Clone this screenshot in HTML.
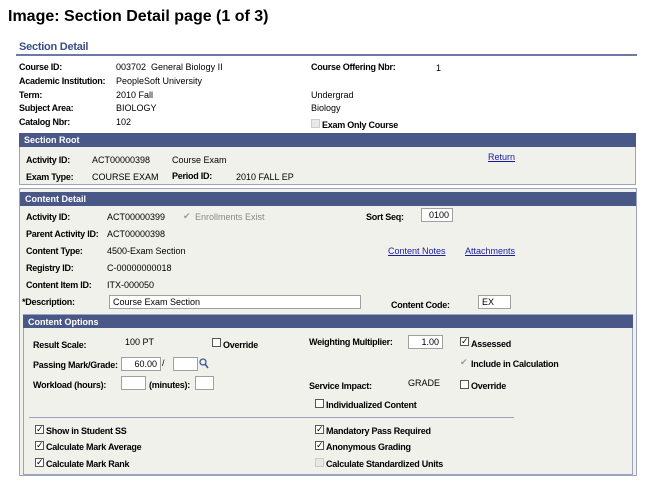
<!DOCTYPE html><html><head><style>
body{margin:0;width:651px;height:491px;background:#fff;font-family:"Liberation Sans",Arial,sans-serif;font-size:9px;color:#000;position:relative;overflow:hidden}
div,span{position:absolute;white-space:nowrap}
.b{font-weight:bold;letter-spacing:-0.25px}
.hd{background:#4a5888;color:#fff;font-weight:bold;height:14px;line-height:14px;padding-left:5px;box-sizing:border-box}
.in{background:#fff;border:1px solid #a0a0a0;box-sizing:border-box;height:14px;line-height:12px;padding:0 3px}
.cb{width:9px;height:9px;border:1px solid #555;background:#fff;box-sizing:border-box;font-size:9px;line-height:7px;text-align:center}
.cd{border-color:#ccc;background:#e8e8e8;color:#999}
a{color:#1a1aa0;text-decoration:underline}
</style></head><body>
<div style="left:8px;top:8px;font-size:16px;font-weight:bold">Image: Section Detail page (1 of 3)</div>
<div class="b" style="left:19px;top:41px;font-size:11px;color:#3b4f86">Section Detail</div>
<div style="left:16px;top:54px;width:621px;height:2px;background:#6d7aa6"></div>
<div class="b" style="left:19px;top:62px">Course ID:</div><div style="left:116px;top:62px">003702&nbsp; General Biology II</div>
<div class="b" style="left:311px;top:62px">Course Offering Nbr:</div><div style="left:436px;top:63px">1</div>
<div class="b" style="left:19px;top:76px">Academic Institution:</div><div style="left:116px;top:76px">PeopleSoft University</div>
<div class="b" style="left:19px;top:90px">Term:</div><div style="left:116px;top:90px">2010 Fall</div><div style="left:311px;top:90px">Undergrad</div>
<div class="b" style="left:19px;top:103px">Subject Area:</div><div style="left:116px;top:103px">BIOLOGY</div><div style="left:311px;top:103px">Biology</div>
<div class="b" style="left:19px;top:117px">Catalog Nbr:</div><div style="left:116px;top:117px">102</div>
<div class="cb cd" style="left:311px;top:119px"></div><div class="b" style="left:322px;top:120px">Exam Only Course</div>
<div style="left:19px;top:133px;width:617px;height:52px;border:1px solid #9aa3bf;background:#f1f1eb;box-sizing:border-box"></div>
<div class="hd" style="left:19px;top:133px;width:617px">Section Root</div>
<div class="b" style="left:26px;top:155px">Activity ID:</div><div style="left:92px;top:155px">ACT00000398</div><div style="left:172px;top:155px">Course Exam</div>
<div style="left:488px;top:152px"><a>Return</a></div>
<div class="b" style="left:26px;top:172px">Exam Type:</div><div style="left:92px;top:172px">COURSE EXAM</div><div class="b" style="left:172px;top:171px">Period ID:</div><div style="left:236px;top:172px">2010 FALL EP</div>
<div style="left:19px;top:188px;width:618px;height:288px;border:1px solid #9aa3bf;background:#f1f1eb;box-sizing:border-box"></div>
<div class="hd" style="left:20px;top:192px;width:616px">Content Detail</div>
<div class="b" style="left:26px;top:212px">Activity ID:</div><div style="left:107px;top:212px">ACT00000399</div>
<div style="left:183px;top:211px;color:#999">&#10004;</div><div style="left:195px;top:212px;color:#888">Enrollments Exist</div>
<div class="b" style="left:366px;top:212px">Sort Seq:</div><div class="in" style="left:421px;top:208px;width:32px;text-align:right">0100</div>
<div class="b" style="left:26px;top:229px">Parent Activity ID:</div><div style="left:107px;top:229px">ACT00000398</div>
<div class="b" style="left:26px;top:246px">Content Type:</div><div style="left:107px;top:246px">4500-Exam Section</div>
<div style="left:388px;top:246px"><a>Content Notes</a></div><div style="left:465px;top:246px"><a>Attachments</a></div>
<div class="b" style="left:26px;top:263px">Registry ID:</div><div style="left:107px;top:263px">C-00000000018</div>
<div class="b" style="left:26px;top:280px">Content Item ID:</div><div style="left:107px;top:280px">ITX-000050</div>
<div class="b" style="left:22px;top:297px">*Description:</div><div class="in" style="left:109px;top:295px;width:252px">Course Exam Section</div>
<div class="b" style="left:391px;top:300px">Content Code:</div><div class="in" style="left:478px;top:295px;width:33px">EX</div>
<div class="hd" style="left:23px;top:314px;width:610px;border-top:1px solid #9aa3bf">Content Options</div>
<div style="left:23px;top:328px;width:610px;height:147px;border:1px solid #9aa3bf;border-top:0;box-sizing:border-box"></div>
<div class="b" style="left:33px;top:340px">Result Scale:</div><div style="left:125px;top:337px">100 PT</div>
<div class="cb" style="left:212px;top:338px"></div><div class="b" style="left:223px;top:340px">Override</div>
<div class="b" style="left:309px;top:337px">Weighting Multiplier:</div><div class="in" style="left:408px;top:335px;width:35px;text-align:right">1.00</div>
<div class="cb" style="left:460px;top:337px">&#10003;</div><div class="b" style="left:471px;top:339px">Assessed</div>
<div class="b" style="left:33px;top:360px">Passing Mark/Grade:</div><div class="in" style="left:121px;top:357px;width:40px;text-align:right">60.00</div>
<div style="left:162px;top:358px">/</div><div class="in" style="left:173px;top:357px;width:25px"></div>
<svg style="position:absolute;left:199px;top:358px" width="10" height="11"><circle cx="4" cy="4" r="3" fill="none" stroke="#3c5a96" stroke-width="1.3"/><line x1="6" y1="6" x2="9" y2="10" stroke="#3c5a96" stroke-width="1.6"/></svg>
<div style="left:460px;top:357px;color:#999">&#10004;</div><div class="b" style="left:471px;top:359px">Include in Calculation</div>
<div class="b" style="left:33px;top:380px">Workload (hours):</div><div class="in" style="left:121px;top:376px;width:25px"></div>
<div class="b" style="left:149px;top:380px">(minutes):</div><div class="in" style="left:195px;top:376px;width:19px"></div>
<div class="b" style="left:309px;top:381px">Service Impact:</div><div style="left:408px;top:378px">GRADE</div>
<div class="cb" style="left:460px;top:380px"></div><div class="b" style="left:471px;top:381px">Override</div>
<div class="cb" style="left:315px;top:399px"></div><div class="b" style="left:326px;top:400px">Individualized Content</div>
<div style="left:29px;top:417px;width:485px;height:1px;background:#9aa3bf"></div>
<div class="cb" style="left:35px;top:425px">&#10003;</div><div class="b" style="left:46px;top:426px">Show in Student SS</div>
<div class="cb" style="left:35px;top:441px">&#10003;</div><div class="b" style="left:46px;top:442px">Calculate Mark Average</div>
<div class="cb" style="left:35px;top:458px">&#10003;</div><div class="b" style="left:46px;top:459px">Calculate Mark Rank</div>
<div class="cb" style="left:315px;top:425px">&#10003;</div><div class="b" style="left:326px;top:426px">Mandatory Pass Required</div>
<div class="cb" style="left:315px;top:441px">&#10003;</div><div class="b" style="left:326px;top:442px">Anonymous Grading</div>
<div class="cb cd" style="left:315px;top:458px"></div><div class="b" style="left:326px;top:459px">Calculate Standardized Units</div>
</body></html>
